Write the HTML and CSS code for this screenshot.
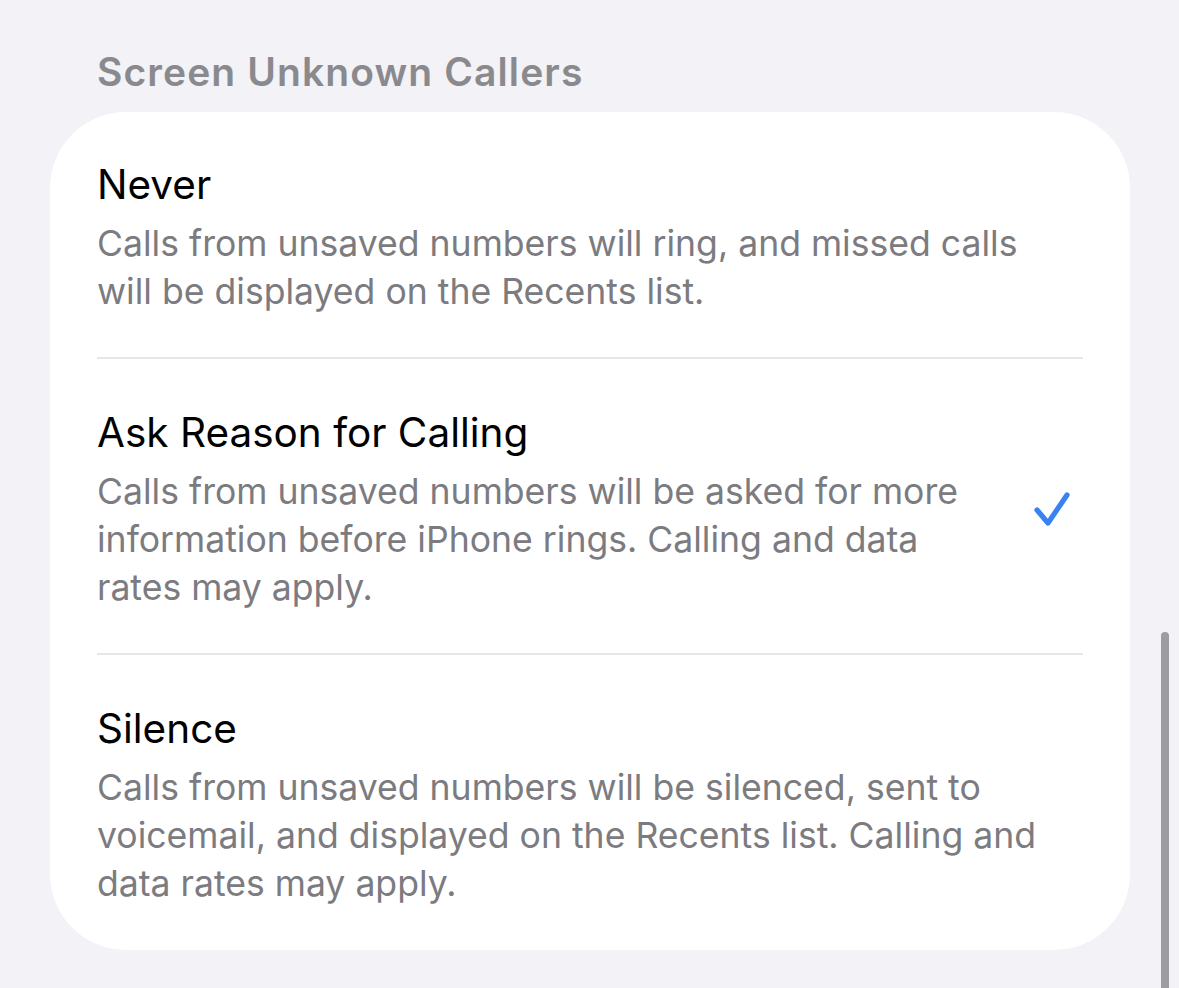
FILE: index.html
```html
<!DOCTYPE html>
<html lang="en">
<head>
<meta charset="utf-8">
<title>Screen Unknown Callers</title>
<link rel="stylesheet" href="styles.css">
</head>
<body>
<main class="page">
  <h2 class="section-title">Screen Unknown Callers</h2>
  <section class="card">
    <div class="row">
      <div class="row-text">
        <div class="row-title">Never</div>
        <p class="row-desc">Calls from unsaved numbers will ring, and missed calls will be displayed on the Recents list.</p>
      </div>
    </div>
    <div class="row row-checked">
      <div class="row-text narrow">
        <div class="row-title">Ask Reason for Calling</div>
        <p class="row-desc">Calls from unsaved numbers will be asked for more information before iPhone rings. Calling and data rates may apply.</p>
      </div>
      <svg class="check" width="40" height="40" viewBox="0 0 40 40" aria-hidden="true">
        <path d="M6 19 L17 32 L36 4" fill="none" stroke="#3a82f0" stroke-width="5.2" stroke-linecap="round" stroke-linejoin="round"/>
      </svg>
    </div>
    <div class="row">
      <div class="row-text">
        <div class="row-title">Silence</div>
        <p class="row-desc">Calls from unsaved numbers will be silenced, sent to voicemail, and displayed on the Recents list. Calling and data rates may apply.</p>
      </div>
    </div>
  </section>
  <div class="scrollbar"></div>
</main>
</body>
</html>
```

FILE: styles.css
```css
html, body {
  margin: 0;
  padding: 0;
  background: #f2f2f7;
  height: 100%;
  overflow: hidden;
}
body {
  font-family: Inter, "Noto Sans", "Liberation Sans", sans-serif;
  -webkit-font-smoothing: antialiased;
}
.page {
  position: relative;
  width: 1179px;
  height: 988px;
}
.section-title {
  margin: 0;
  padding: 49px 0 0 97px;
  font-size: 39px;
  line-height: 46px;
  font-weight: 600;
  color: #8a8a8e;
  letter-spacing: 1.1px;
}
.card {
  margin: 17px 0 0 50px;
  width: 1080px;
  box-sizing: border-box;
  background: #ffffff;
  border-radius: 76px;
  padding: 0 47px;
}
.row {
  display: flex;
  align-items: center;
  padding: 50px 0 41px;
  border-bottom: 2px solid #e5e5ea;
}
.row:last-child {
  border-bottom: none;
  padding-bottom: 42px;
}
.row + .row {
  padding-top: 51px;
}
.row-text {
  flex: 1;
  max-width: 970px;
}
.row-text.narrow {
  max-width: 890px;
}
.row-title {
  font-size: 40.5px;
  line-height: 46px;
  color: #000000;
  margin-bottom: 12px;
}
.row-desc {
  margin: 0;
  font-size: 35.6px;
  line-height: 48px;
  color: #7b7b80;
}
.check {
  margin-left: auto;
  margin-right: 12px;
  flex: none;
  overflow: visible;
}
.scrollbar {
  position: absolute;
  left: 1161px;
  top: 632px;
  width: 8px;
  height: 400px;
  border-radius: 4px;
  background: #9d9da1;
}
```
